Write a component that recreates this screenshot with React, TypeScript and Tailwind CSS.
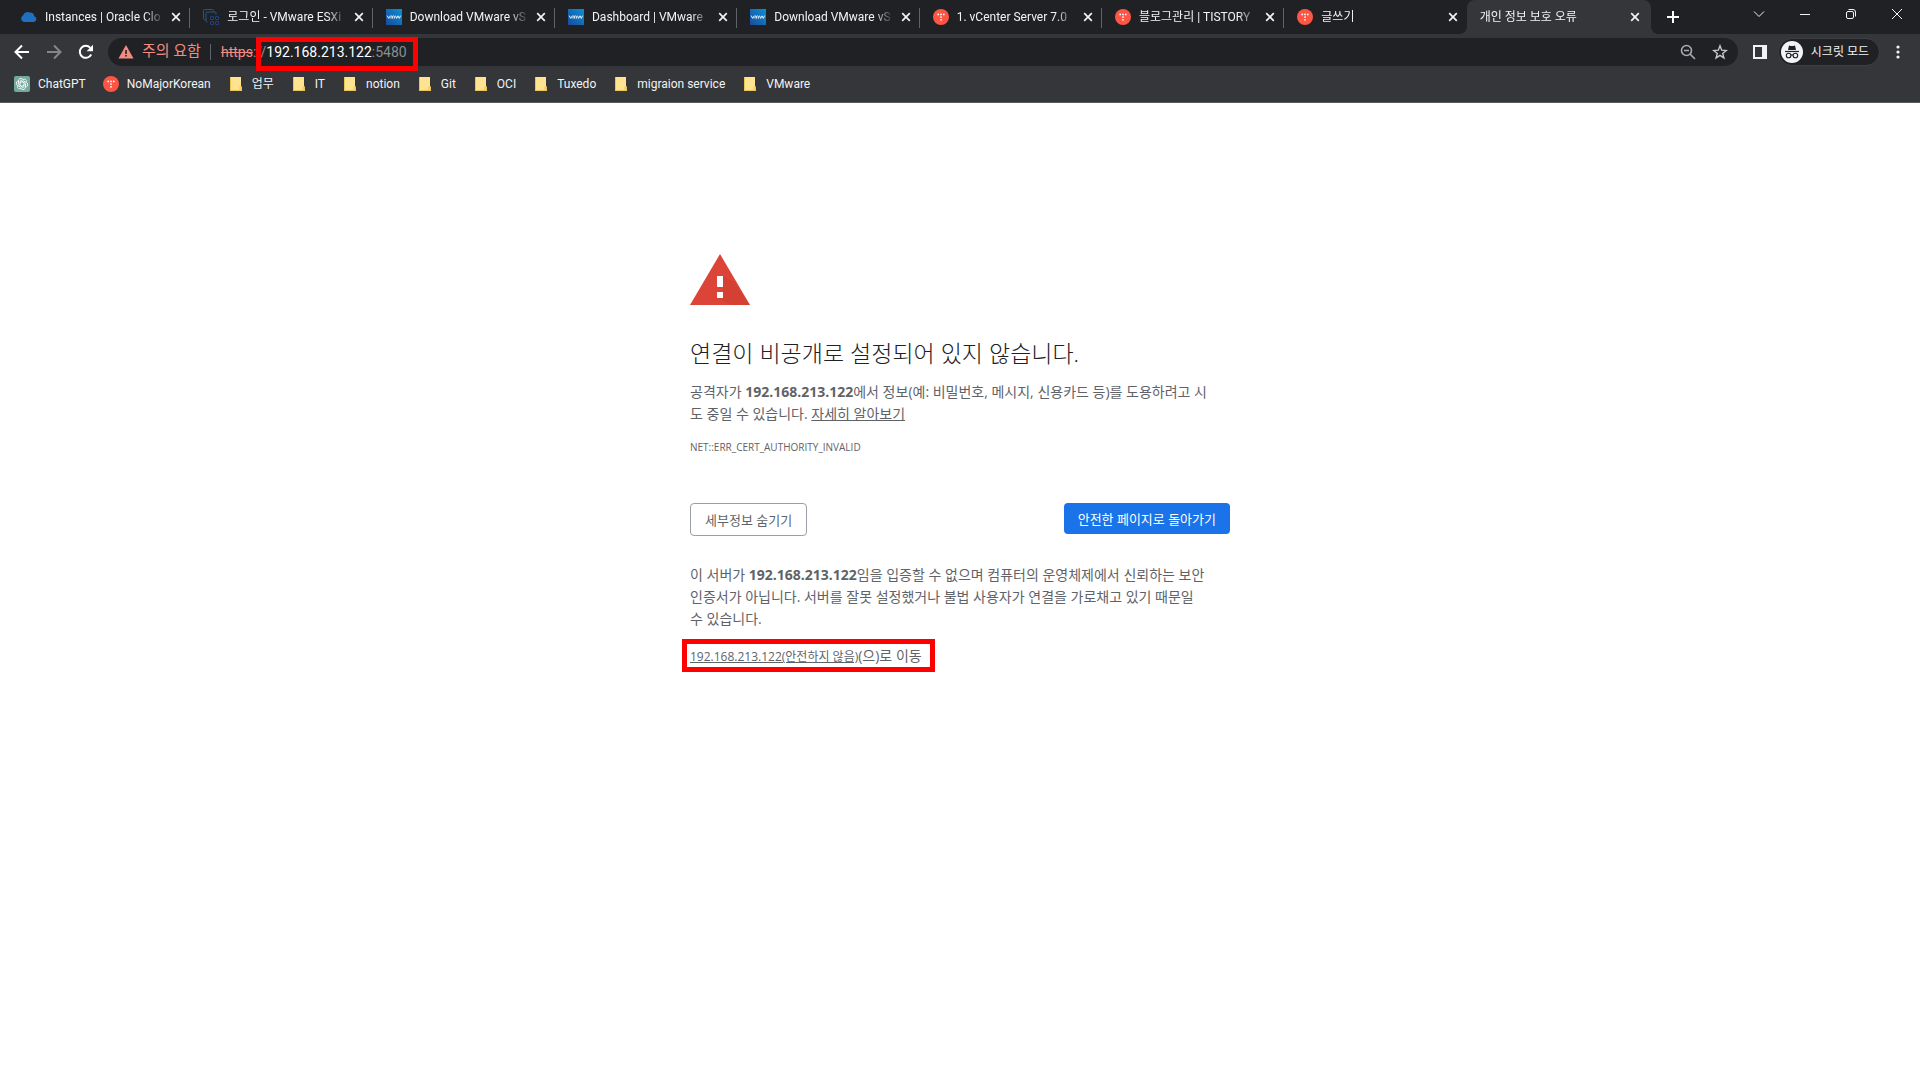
import type { ReactNode } from "react";

function CloudIcon() {
  return (
    <svg viewBox="0 0 16 16" className="size-4 shrink-0" aria-hidden="true">
      <path d="M3.6 13A3.4 3.4 0 0 1 2 6.6 4.6 4.6 0 0 1 8.6 3.6a4 4 0 0 1 4.7 3.6A3 3 0 0 1 13 13z" fill="#1f70c1" />
    </svg>
  );
}

function EsxiIcon() {
  return (
    <svg viewBox="0 0 16 16" className="size-4 shrink-0" fill="none" aria-hidden="true">
      <path d="M2.5 10.5h-1a1 1 0 0 1-1-1v-8a1 1 0 0 1 1-1h8a1 1 0 0 1 1 1v1" stroke="#1c5a8c" />
      <path d="M4.500 13H4a1 1 0 0 1-1-1V4a1 1 0 0 1 1-1h8a1 1 0 0 1 1 1v1.500" stroke="#1c5a8c" />
      <g stroke="#1d4480">
        <rect x="7.500" y="7.500" width="3" height="3" rx=".5" />
        <rect x="12.500" y="7.500" width="3" height="3" rx=".5" />
        <rect x="7.500" y="12.500" width="3" height="3" rx=".5" />
        <rect x="12.500" y="12.500" width="3" height="3" rx=".5" />
      </g>
    </svg>
  );
}

function VmwIcon() {
  return (
    <svg viewBox="0 0 16 16" className="size-4 shrink-0" aria-hidden="true">
      <defs>
        <linearGradient id="vmw" x1="1" y1="0" x2="0" y2="1">
          <stop offset="0" stopColor="#0a90d4" />
          <stop offset="1" stopColor="#1b4a9c" />
        </linearGradient>
      </defs>
      <rect width="16" height="16" fill="url(#vmw)" />
      <path
        d="M1.2 6.6 2.7 9.4 4.4 6.6M5 9.6V7.4q.8-1 1.6 0v2.2M6.6 7.4q.9-1 1.8 0v2.2M9.4 6.6l1.2 2.8L12 6.8l1.3 2.6 1.3-2.8"
        fill="none"
        stroke="#e6f2fb"
        strokeWidth="1"
        strokeLinejoin="round"
      />
    </svg>
  );
}

function TistoryIcon() {
  return (
    <svg viewBox="0 0 16 16" className="size-4 shrink-0" aria-hidden="true">
      <circle cx="8" cy="8" r="8" fill="#ff5544" />
      <g fill="#fff">
        <circle cx="5.2" cy="5.4" r=".9" />
        <circle cx="8" cy="5.4" r=".9" />
        <circle cx="10.8" cy="5.4" r=".9" />
        <circle cx="8" cy="8.1" r=".9" />
        <circle cx="8" cy="10.8" r=".9" />
      </g>
    </svg>
  );
}

function ChatGptIcon() {
  return (
    <svg viewBox="0 0 16 16" className="size-4 shrink-0" aria-hidden="true">
      <rect width="16" height="16" rx="2" fill="#74aa9c" />
      <g fill="none" stroke="#fff" strokeWidth=".85">
        {[0, 60, 120, 180, 240, 300].map((a) => (
          <path key={a} transform={`rotate(${a} 8 8)`} d="M6 9.2V5.2L8.9 3.5a2.4 2.4 0 0 1 3.7 2.3" />
        ))}
      </g>
    </svg>
  );
}

function FolderIcon() {
  return (
    <svg viewBox="0 0 16 16" className="size-4 shrink-0" aria-hidden="true">
      <path d="M2 1h11v9.500h1V15H2z" fill="#ffe391" />
      <path d="M2.500 1v13.500h9.500V11h1.500v3.500h-2" fill="none" stroke="#e9c451" />
    </svg>
  );
}

function CloseGlyph() {
  return (
    <svg viewBox="0 0 16 16" className="size-4" aria-hidden="true">
      <path d="M4.200 4.200l7.600 7.600M11.800 4.200l-7.600 7.600" stroke="#f1f3f4" strokeWidth="1.700" />
    </svg>
  );
}

type Tab = { title: string; icon?: ReactNode; active?: boolean };

const tabs: Tab[] = [
  { title: "Instances | Oracle Clo", icon: <CloudIcon /> },
  { title: "로그인 - VMware ESXi", icon: <EsxiIcon /> },
  { title: "Download VMware vS", icon: <VmwIcon /> },
  { title: "Dashboard | VMware", icon: <VmwIcon /> },
  { title: "Download VMware vS", icon: <VmwIcon /> },
  { title: "1. vCenter Server 7.0", icon: <TistoryIcon /> },
  { title: "블로그관리 | TISTORY", icon: <TistoryIcon /> },
  { title: "글쓰기", icon: <TistoryIcon /> },
  { title: "개인 정보 보호 오류", active: true },
];

const bookmarks: { label: string; icon: ReactNode }[] = [
  { label: "ChatGPT", icon: <ChatGptIcon /> },
  { label: "NoMajorKorean", icon: <TistoryIcon /> },
  { label: "업무", icon: <FolderIcon /> },
  { label: "IT", icon: <FolderIcon /> },
  { label: "notion", icon: <FolderIcon /> },
  { label: "Git", icon: <FolderIcon /> },
  { label: "OCI", icon: <FolderIcon /> },
  { label: "Tuxedo", icon: <FolderIcon /> },
  { label: "migraion service", icon: <FolderIcon /> },
  { label: "VMware", icon: <FolderIcon /> },
];

function TabItem({ tab, divider }: { tab: Tab; divider: boolean }) {
  return (
    <div
      className={
        tab.active
          ? "relative flex min-w-0 flex-1 items-center rounded-t-lg bg-[#35363a] pr-2 pl-[13px]"
          : "relative flex min-w-0 flex-1 items-center gap-2 pr-[6px] pl-[13px]"
      }
    >
      {tab.icon}
      <button
        type="button"
        className="-mr-1 min-w-0 flex-1 overflow-hidden text-left whitespace-nowrap text-[#f1f3f4] [mask-image:linear-gradient(to_right,#000_calc(100%-20px),transparent)]"
      >
        {tab.title}
      </button>
      <button type="button" aria-label="닫기" className="shrink-0">
        <CloseGlyph />
      </button>
      {divider && <span className="absolute top-2 right-0 h-5 w-px bg-[#5f6368]" />}
      {tab.active && (
        <>
          <span className="absolute bottom-0 -left-2 size-2 bg-[radial-gradient(circle_at_0_0,transparent_8px,#35363a_8px)]" />
          <span className="absolute -right-2 bottom-0 size-2 bg-[radial-gradient(circle_at_100%_0,transparent_8px,#35363a_8px)]" />
        </>
      )}
    </div>
  );
}

function WindowButton({ label, children }: { label: string; children: ReactNode }) {
  return (
    <button type="button" aria-label={label} className="flex h-7 w-[46px] items-center justify-center">
      <svg viewBox="0 0 12 12" className="size-3" fill="none" stroke="#f1f3f4" strokeWidth="1" aria-hidden="true">
        {children}
      </svg>
    </button>
  );
}

function ToolButton({ label, children }: { label: string; children: ReactNode }) {
  return (
    <button type="button" aria-label={label} className="flex size-7 items-center justify-center">
      <svg viewBox="0 0 16 16" className="size-4" fill="none" aria-hidden="true">
        {children}
      </svg>
    </button>
  );
}

function Browser() {
  return (
    <header className="bg-[#35363a] font-['Roboto','Noto_Sans_CJK_KR',sans-serif] text-xs text-[#f1f3f4]">
      <div className="flex h-[34px] justify-between bg-[#202124]">
        <div className="flex min-w-0 flex-1">
          <div className="flex max-w-[1651px] min-w-0 flex-1 pl-2">
            {tabs.map((tab, i) => (
              <TabItem key={i} tab={tab} divider={i < 7} />
            ))}
          </div>
          <button type="button" aria-label="새 탭" className="ml-2 flex w-7 items-center justify-center">
            <svg viewBox="0 0 12 12" className="size-3" aria-hidden="true">
              <path d="M6 0v12M0 6h12" stroke="#fff" strokeWidth="2" />
            </svg>
          </button>
        </div>
        <div className="flex">
          <WindowButton label="탭 검색">
            <path d="M1 3.500l5 5 5-5" />
          </WindowButton>
          <WindowButton label="최소화">
            <path d="M1 6.500h10" />
          </WindowButton>
          <WindowButton label="이전 크기로 복원">
            <rect x="1.500" y="3.500" width="7" height="7" rx="1.500" />
            <path d="M3.500 1.500H8a2.500 2.500 0 0 1 2.500 2.500v4.500" />
          </WindowButton>
          <WindowButton label="창 닫기">
            <path d="M1 1l10 10M11 1L1 11" />
          </WindowButton>
        </div>
      </div>

      <div className="flex h-9 items-center pr-2 pl-2">
        <div className="flex gap-1">
          <ToolButton label="뒤로">
            <path d="M15 8H2M8 1.500L1.500 8 8 14.500" stroke="#fff" strokeWidth="2" />
          </ToolButton>
          <ToolButton label="앞으로">
            <path d="M1 8h13M8 1.500L14.500 8 8 14.500" stroke="#85868a" strokeWidth="2" />
          </ToolButton>
          <ToolButton label="새로고침">
            <path d="M13.200 10.500A6 6 0 1 1 12.300 3.800" stroke="#fff" strokeWidth="2" />
            <path d="M15 .8v6.400H8.600z" fill="#fff" />
          </ToolButton>
        </div>

        <div className="ml-2 flex h-7 min-w-0 flex-1 items-center rounded-full bg-[#202124] pl-[10px] text-sm">
          <button type="button" className="flex items-center gap-2 text-[15px] text-[#f28b82]">
            <svg viewBox="0 0 16 16" className="size-4" aria-hidden="true">
              <path d="M8 1l7.500 13.500H.5z" fill="#f28b82" />
              <path d="M8 6v4M8 11v1.600" stroke="#202124" strokeWidth="1.600" />
            </svg>
            주의 요함
          </button>
          <span className="ml-[9px] h-4 w-px bg-[#5f6368]" />
          <div className="ml-[10px] whitespace-nowrap text-[#8b8e92]">
            <span className="text-[#f28b82] line-through">https</span>://
            <span className="relative text-white">
              192.168.213.122
              <span className="absolute -top-[7px] -left-[10px] h-[34px] w-[162px] border-5 border-[#fe0000]" />
            </span>
            :5480
          </div>
          <div className="ml-auto flex gap-1 pr-1">
            <ToolButton label="확대/축소">
              <circle cx="6.500" cy="6.500" r="5" stroke="#a8abb0" strokeWidth="1.600" />
              <path d="M10 10l5 5M4 6.500h5" stroke="#a8abb0" strokeWidth="1.600" />
            </ToolButton>
            <ToolButton label="북마크에 추가">
              <path d="M8 1.800l1.700 4.400 4.600.3-3.600 2.900 1.200 4.500L8 11.400l-3.900 2.500 1.200-4.500L1.700 6.500l4.600-.3z" stroke="#c6c8cb" strokeWidth="1.400" />
            </ToolButton>
          </div>
        </div>

        <div className="ml-2 flex items-center gap-1">
          <ToolButton label="측면 패널">
            <path d="M2 2h12v12H2z" stroke="#f1f3f4" strokeWidth="2" />
            <path d="M10 1h5v14h-5z" fill="#f1f3f4" />
          </ToolButton>
          <button type="button" className="flex h-7 items-center gap-2 rounded-full border border-[#3f4043] bg-[#202124] pr-[10px] pl-0.5 text-xs whitespace-nowrap">
            <svg viewBox="0 0 22 22" className="size-[22px]" aria-hidden="true">
              <circle cx="11" cy="11" r="11" fill="#f1f3f4" />
              <path d="M7 9l1-4.500 1.700.5h2.600l1.700-.5L15 9z" fill="#202124" />
              <path d="M4 10.500h14" stroke="#202124" strokeWidth="1.200" />
              <g fill="none" stroke="#202124" strokeWidth="1.100">
                <circle cx="7.600" cy="14.500" r="2.300" />
                <circle cx="14.400" cy="14.500" r="2.300" />
                <path d="M9.900 14.200q1.100-.7 2.200 0" />
              </g>
            </svg>
            시크릿 모드
          </button>
          <ToolButton label="메뉴">
            <g fill="#f1f3f4">
              <circle cx="8" cy="3" r="1.600" />
              <circle cx="8" cy="8" r="1.600" />
              <circle cx="8" cy="13" r="1.600" />
            </g>
          </ToolButton>
        </div>
      </div>

      <nav aria-label="북마크" className="flex h-[33px] items-center gap-[17px] border-b border-[#5a5b5e] pb-1 pl-[14px]">
        {bookmarks.map((b) => (
          <a key={b.label} href="#" className="flex items-center gap-2 whitespace-nowrap">
            {b.icon}
            {b.label}
          </a>
        ))}
      </nav>
    </header>
  );
}

export default function App() {
  return (
    <div className="min-h-screen bg-white font-['Open_Sans','Noto_Sans_CJK_KR',sans-serif]">
      <Browser />
      <main className="mx-auto mt-[151px] max-w-[540px] text-sm leading-[22px] text-[#5f6368]">
        <svg viewBox="0 0 60 51" className="h-[51px] w-[60px]" aria-hidden="true">
          <path d="M30 0l30 51H0z" fill="#db4437" />
          <path d="M33 22l12 7 15 22H42L27 43l6-6z" fill="#c53929" opacity=".3" />
          <path d="M27 22h6v11h-6zM27 38h6v6h-6z" fill="#fff" />
        </svg>
        <h1 className="mt-8 text-[23px] leading-8 font-light whitespace-nowrap text-[#202124]">
          연결이 비공개로 설정되어 있지 않습니다.
        </h1>
        <p className="mt-3">
          공격자가 <strong>192.168.213.122</strong>에서 정보(예: 비밀번호, 메시지, 신용카드 등)를 도용하려고 시
          <br />도 중일 수 있습니다.{" "}
          <a href="#" className="underline">
            자세히 알아보기
          </a>
        </p>
        <p className="mt-3 text-[10px] leading-5">NET::ERR_CERT_AUTHORITY_INVALID</p>
        <div className="mt-[46px] flex items-start justify-between">
          <button type="button" className="h-[33px] rounded border border-[#9aa0a6] px-[14px] text-[13px]">
            세부정보 숨기기
          </button>
          <button type="button" className="h-[31px] rounded bg-[#1a73e8] px-[14px] text-[13px] text-white">
            안전한 페이지로 돌아가기
          </button>
        </div>
        <p className="mt-7">
          이 서버가 <strong>192.168.213.122</strong>임을 입증할 수 없으며 컴퓨터의 운영체제에서 신뢰하는 보안
          <br />
          인증서가 아닙니다. 서버를 잘못 설정했거나 불법 사용자가 연결을 가로채고 있기 때문일
          <br />수 있습니다.
        </p>
        <p className="relative mt-[15px] w-fit">
          <a href="#" className="text-xs underline">
            192.168.213.122(안전하지 않음)
          </a>
          (으)로 이동
          <span className="absolute -top-[6px] -left-2 h-[33px] w-[253px] border-5 border-[#fe0000]" />
        </p>
      </main>
    </div>
  );
}
